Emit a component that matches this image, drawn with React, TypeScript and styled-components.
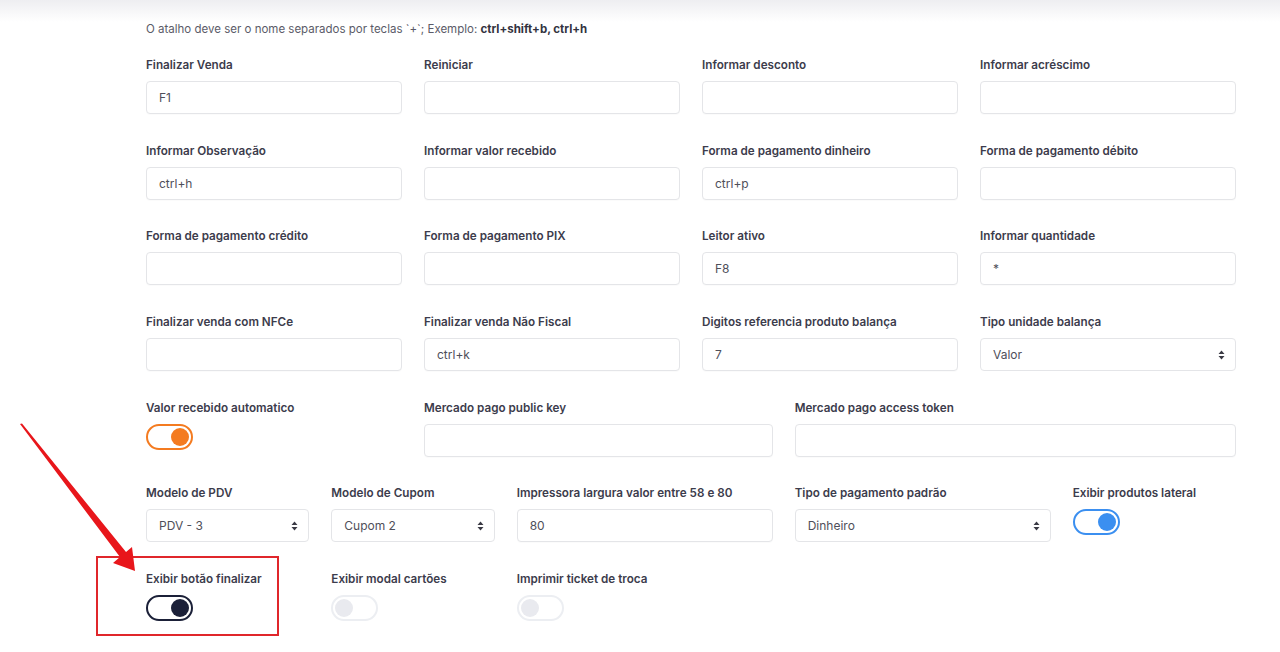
import React from "react";
import styled, { createGlobalStyle } from "styled-components";

const Global = createGlobalStyle`
  html, body { margin: 0; padding: 0; background: #ffffff; }
  body { font-family: "Inter", "Noto Sans", "Liberation Sans", sans-serif; }
  * { box-sizing: border-box; }
`;

const Page = styled.div`
  position: relative;
  width: 1280px;
  height: 652px;
  overflow: hidden;
  background: #fff;
`;

const TopShade = styled.div`
  height: 22px;
  background: linear-gradient(#eeeef1, #ffffff);
`;

const Content = styled.div`
  padding: 0 33px 0 135px;
`;

const Note = styled.p`
  margin: 0 11px 20px;
  font-size: 11.5px;
  line-height: 14px;
  color: #5b5b68;
  b { color: #333340; font-weight: 700; }
`;

const Row = styled.div`
  display: flex;
  flex-wrap: wrap;
`;

const Col = styled.div<{ $span: number }>`
  position: relative;
  width: ${(p) => (p.$span / 12) * 100}%;
  padding: 0 11px;
  margin-bottom: 27.67px;
`;

const Label = styled.label`
  display: block;
  height: 18px;
  margin-bottom: 7px;
  font-size: 11.7px;
  line-height: 18px;
  font-weight: 600;
  color: #3c3c4c;
  white-space: nowrap;
`;

const Input = styled.input`
  display: block;
  width: 100%;
  height: 33px;
  padding: 0 12px;
  border: 1px solid #e4e5e8;
  border-radius: 4px;
  background: #fff;
  font-family: inherit;
  font-size: 12px;
  color: #4f4f5a;
  outline: none;
  box-shadow: 0 1px 1px rgba(0, 0, 0, 0.02);
`;

const SelectWrap = styled.div`
  position: relative;
`;

const Select = styled.select`
  display: block;
  width: 100%;
  height: 33px;
  padding: 0 30px 0 12px;
  border: 1px solid #e4e5e8;
  border-radius: 4px;
  background: #fff;
  font-family: inherit;
  font-size: 12px;
  color: #4f4f5a;
  outline: none;
  appearance: none;
  -webkit-appearance: none;
`;

const Caret = styled.svg`
  position: absolute;
  right: 11px;
  top: 12px;
  pointer-events: none;
`;

const Toggle = styled.div<{ $color: string; $on: boolean }>`
  display: flex;
  align-items: center;
  justify-content: ${(p) => (p.$on ? "flex-end" : "flex-start")};
  width: 47px;
  height: 26px;
  margin-top: 2px;
  padding: 2px;
  border-radius: 13px;
  border: 2px solid ${(p) => (p.$on ? p.$color : "#eceef2")};
  background: #fff;
`;

const Knob = styled.span<{ $color: string; $on: boolean }>`
  width: 18px;
  height: 18px;
  border-radius: 50%;
  background: ${(p) => (p.$on ? p.$color : "#e9eaef")};
`;

const Highlight = styled.div`
  position: absolute;
  left: -39px;
  top: -14px;
  width: 183px;
  height: 80px;
  border: 2px solid #e0262b;
  pointer-events: none;
`;

const Arrow = styled.svg`
  position: absolute;
  left: 0;
  top: 0;
  pointer-events: none;
`;

type FieldDef = {
  label: string;
  span: number;
  kind: "input" | "select" | "toggle";
  value?: string;
  color?: string;
  on?: boolean;
  highlight?: boolean;
};

const fields: FieldDef[] = [
  { label: "Finalizar Venda", span: 3, kind: "input", value: "F1" },
  { label: "Reiniciar", span: 3, kind: "input" },
  { label: "Informar desconto", span: 3, kind: "input" },
  { label: "Informar acréscimo", span: 3, kind: "input" },
  { label: "Informar Observação", span: 3, kind: "input", value: "ctrl+h" },
  { label: "Informar valor recebido", span: 3, kind: "input" },
  { label: "Forma de pagamento dinheiro", span: 3, kind: "input", value: "ctrl+p" },
  { label: "Forma de pagamento débito", span: 3, kind: "input" },
  { label: "Forma de pagamento crédito", span: 3, kind: "input" },
  { label: "Forma de pagamento PIX", span: 3, kind: "input" },
  { label: "Leitor ativo", span: 3, kind: "input", value: "F8" },
  { label: "Informar quantidade", span: 3, kind: "input", value: "*" },
  { label: "Finalizar venda com NFCe", span: 3, kind: "input" },
  { label: "Finalizar venda Não Fiscal", span: 3, kind: "input", value: "ctrl+k" },
  { label: "Digitos referencia produto balança", span: 3, kind: "input", value: "7" },
  { label: "Tipo unidade balança", span: 3, kind: "select", value: "Valor" },
  { label: "Valor recebido automatico", span: 3, kind: "toggle", color: "#f47b20", on: true },
  { label: "Mercado pago public key", span: 4, kind: "input" },
  { label: "Mercado pago access token", span: 5, kind: "input" },
  { label: "Modelo de PDV", span: 2, kind: "select", value: "PDV - 3" },
  { label: "Modelo de Cupom", span: 2, kind: "select", value: "Cupom 2" },
  { label: "Impressora largura valor entre 58 e 80", span: 3, kind: "input", value: "80" },
  { label: "Tipo de pagamento padrão", span: 3, kind: "select", value: "Dinheiro" },
  { label: "Exibir produtos lateral", span: 2, kind: "toggle", color: "#3b8ff0", on: true },
  { label: "Exibir botão finalizar", span: 2, kind: "toggle", color: "#1b2038", on: true, highlight: true },
  { label: "Exibir modal cartões", span: 2, kind: "toggle", on: false },
  { label: "Imprimir ticket de troca", span: 2, kind: "toggle", on: false },
];

const Field: React.FC<{ f: FieldDef }> = ({ f }) => (
  <Col $span={f.span}>
    <Label>{f.label}</Label>
    {f.kind === "input" && <Input defaultValue={f.value ?? ""} />}
    {f.kind === "select" && (
      <SelectWrap>
        <Select defaultValue={f.value}>
          <option>{f.value}</option>
        </Select>
        <Caret width="7" height="10" viewBox="0 0 7 10">
          <path d="M3.5 0.5 L6.5 4 L0.5 4 Z M3.5 9.5 L6.5 6 L0.5 6 Z" fill="#3a3a44" />
        </Caret>
      </SelectWrap>
    )}
    {f.kind === "toggle" && (
      <Toggle $color={f.color ?? "#ccc"} $on={!!f.on}>
        <Knob $color={f.color ?? "#ccc"} $on={!!f.on} />
      </Toggle>
    )}
    {f.highlight && <Highlight />}
  </Col>
);

export default function App() {
  return (
    <Page>
      <Global />
      <TopShade />
      <Content>
        <Note>
          O atalho deve ser o nome separados por teclas `+`; Exemplo: <b>ctrl+shift+b, ctrl+h</b>
        </Note>
        <Row>
          {fields.map((f) => (
            <Field key={f.label} f={f} />
          ))}
        </Row>
      </Content>
      <Arrow width="160" height="600" viewBox="0 0 160 600">
        <polygon points="20,424 22,423.5 126,552 132,547 135,571 113,563 120,557" fill="#e8161b" />
      </Arrow>
    </Page>
  );
}
